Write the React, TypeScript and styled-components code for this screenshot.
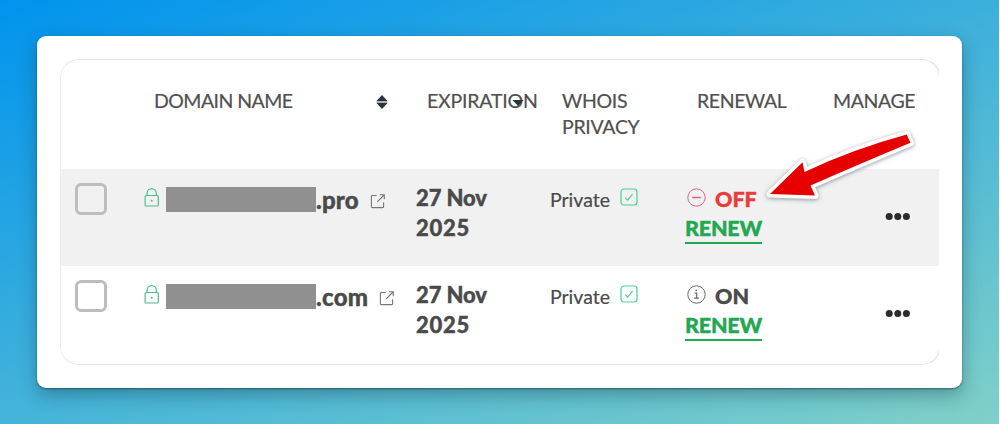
import React from 'react'
import styled, { createGlobalStyle } from 'styled-components'

const GlobalStyle = createGlobalStyle`
	body {
		margin: 0;
	}

	#root {
		font-family: Lato, 'Liberation Sans', sans-serif;
		color: #4a4a4a;
	}
`

const Backdrop = styled.div`
	box-sizing: border-box;
	width: 999px;
	height: 424px;
	padding: 36px 37px 36px;
	background: linear-gradient(160deg, #0093ee 0%, #80d0c7 100%);
	overflow: hidden;
`

const Card = styled.main`
	box-sizing: border-box;
	position: relative;
	height: 352px;
	padding: 23px 23px 0;
	background: #fff;
	border-radius: 9px;
	box-shadow: 0 1px 2px rgba(20, 50, 60, 0.55), 0 7px 18px rgba(20, 50, 60, 0.36);
`

const TableClip = styled.div`
	height: 306px;
	border-radius: 17px 0 0 17px;
	overflow: hidden;
`

const Table = styled.div`
	box-sizing: border-box;
	width: 881px;
	height: 306px;
	border: solid #e6e6e6;
	border-width: 1px 2px;
	border-left: 1px solid #ececec;
	border-radius: 19px;
	overflow: hidden;
`

const columns = '82px 273px 135px 135px 136px 118px'

const HeaderRow = styled.div`
	display: grid;
	grid-template-columns: ${columns};
	height: 109px;
`

const HeaderCell = styled.div<{ $spacing?: number }>`
	display: flex;
	align-items: flex-start;
	padding: 28px 0 0 11px;
	font-size: 19.5px;
	line-height: 26px;
	letter-spacing: ${(p) => p.$spacing || 0}px;
	color: #505050;
	-webkit-text-stroke: 0.2px;
`

const SortIcon = styled.svg<{ $offset: number }>`
	flex: none;
	width: 12px;
	height: 14px;
	margin: 7px 0 0 ${(p) => p.$offset}px;
`

const Row = styled.div<{ $shaded?: boolean }>`
	display: grid;
	grid-template-columns: ${columns};
	height: 97px;
	background: ${(p) => (p.$shaded ? '#f1f1f1' : '#fff')};
`

const Checkbox = styled.span`
	box-sizing: border-box;
	width: 32px;
	height: 32px;
	margin: 14px 0 0 14px;
	border: 3px solid #bdbdbd;
	border-radius: 6px;
`

const DomainCell = styled.div`
	display: flex;
	align-items: flex-start;
`

const LockIcon = styled.svg`
	width: 16px;
	height: 20px;
	margin: 19px 7px 0 0;
`

const Redacted = styled.span`
	width: 150px;
	height: 25px;
	margin-top: 17.5px;
	background: #909090;
`

const Tld = styled.span<{ $spacing: number }>`
	margin-top: 16px;
	font-size: 24px;
	font-weight: 900;
	line-height: 30px;
	letter-spacing: ${(p) => p.$spacing}px;
	-webkit-text-stroke: 0.4px;
`

const ExternalIcon = styled.svg`
	width: 16px;
	height: 16px;
	margin: 24px 0 0 11px;
`

const DateCell = styled.div`
	padding-top: 14px;
	font-size: 22px;
	font-weight: 900;
	line-height: 29.5px;
	letter-spacing: -0.1px;
	-webkit-text-stroke: 0.4px;
`

const DateYear = styled.div`
	letter-spacing: 0.7px;
`

const PrivacyCell = styled.div`
	display: flex;
	align-items: flex-start;
	margin-left: -1px;
	padding-top: 16px;
	font-size: 19.5px;
	line-height: 30px;
	-webkit-text-stroke: 0.2px;
`

const CheckIcon = styled.svg`
	width: 18px;
	height: 18px;
	margin: 3px 0 0 10px;
`

const RenewalCell = styled.div`
	display: flex;
	flex-direction: column;
	align-items: flex-start;
	margin-left: -1px;
	padding-top: 15px;
	-webkit-text-stroke: 0.4px;
`

const Status = styled.div<{ $off?: boolean }>`
	display: flex;
	align-items: flex-start;
	gap: 9px;
	padding-left: 2px;
	font-size: 21.5px;
	font-weight: 900;
	line-height: 30px;
	color: ${(p) => (p.$off ? '#e93b3b' : '#4a4a4a')};
`

const StatusIcon = styled.svg`
	width: 19px;
	height: 19px;
	margin-top: 4px;
`

const RenewLink = styled.a`
	height: 28px;
	font-size: 21.5px;
	font-weight: 900;
	line-height: 29px;
	letter-spacing: -0.2px;
	color: #22a850;
	border-bottom: 2px solid #22a850;
`

const MenuDots = styled.svg`
	width: 26px;
	height: 8px;
	margin: 44px 0 0 63px;
`

const Arrow = styled.svg`
	position: absolute;
	left: 723px;
	top: 83px;
	width: 170px;
	height: 90px;
	filter: drop-shadow(0 1px 2px rgba(40, 60, 80, 0.5));
`

interface Domain {
	tld: string
	tldSpacing: number
	autoRenew: boolean
}

const domains: Domain[] = [
	{ tld: '.pro', tldSpacing: 0.2, autoRenew: false },
	{ tld: '.com', tldSpacing: 0.3, autoRenew: true },
]

const DomainRow: React.FunctionComponent<Domain> = ({ tld, tldSpacing, autoRenew }: Domain) => {
	return (
		<Row $shaded={!autoRenew}>
			<Checkbox />
			<DomainCell>
				<LockIcon viewBox="0 0 16 20" fill="none" stroke="#4fbd8b" strokeWidth="1.2">
					<rect x="2.1" y="7.5" width="13.2" height="10.5" rx="1" />
					<path d="M4.1 7.5V5.2a4.6 4.6 0 0 1 9.2 0v2.3" />
					<circle cx="8.7" cy="12.7" r="1" fill="#4fbd8b" stroke="none" />
				</LockIcon>
				<Redacted />
				<Tld $spacing={tldSpacing}>{tld}</Tld>
				<ExternalIcon viewBox="0 0 16 16" fill="none" stroke="#777" strokeWidth="1.1">
					<path d="M6.7 2.5H2.2a.8.8 0 0 0-.8.8v10.5c0 .4.4.8.8.8h10.6c.4 0 .8-.4.8-.8V9.3M7.3 8.8 14 2M9.8 1.7h4.5v4.5" />
				</ExternalIcon>
			</DomainCell>
			<DateCell>
				27 Nov
				<DateYear>2025</DateYear>
			</DateCell>
			<PrivacyCell>
				Private
				<CheckIcon viewBox="0 0 18 18" fill="none" stroke="#4ccf94" strokeWidth="1.2">
					<rect x="1" y="1" width="16" height="16" rx="3" />
					<path d="m5.3 9.8 2.4 2.3 4.8-6" />
				</CheckIcon>
			</PrivacyCell>
			<RenewalCell>
				<Status $off={!autoRenew}>
					{autoRenew ? (
						<StatusIcon viewBox="0 0 19 19" fill="none" stroke="#666" strokeWidth="1">
							<circle cx="9.5" cy="9.5" r="8.7" />
							<path d="M7.5 8h2.2v5M7.2 13.2h4.6" strokeWidth="1.2" />
							<circle cx="9.3" cy="5.3" r="0.9" fill="#666" stroke="none" />
						</StatusIcon>
					) : (
						<StatusIcon viewBox="0 0 19 19" fill="none" stroke="#e3608a" strokeWidth="1">
							<circle cx="9.5" cy="9.5" r="8.7" />
							<path d="M5.2 9.5h8.6" strokeWidth="1.3" />
						</StatusIcon>
					)}
					{autoRenew ? 'ON' : 'OFF'}
				</Status>
				<RenewLink>RENEW</RenewLink>
			</RenewalCell>
			<MenuDots viewBox="0 0 26 8" fill="#2b2b2b">
				<circle cx="4.2" cy="3.6" r="3.5" />
				<circle cx="12.8" cy="3.6" r="3.5" />
				<circle cx="21.4" cy="3.6" r="3.5" />
			</MenuDots>
		</Row>
	)
}

const App: React.FunctionComponent = () => {
	return (
		<Backdrop>
			<GlobalStyle />
			<Card>
				<TableClip>
					<Table>
						<HeaderRow>
							<span />
							<HeaderCell $spacing={-0.55}>
								DOMAIN NAME
								<SortIcon $offset={83} viewBox="0 0 12 14" fill="#28343a">
									<path d="M6 0l5.5 6H.5zM.5 8h11L6 14z" />
									<path d="M.5 6h11v2H.5z" fill="#aab3b6" />
								</SortIcon>
							</HeaderCell>
							<HeaderCell $spacing={-0.2}>
								EXPIRATION
								<SortIcon $offset={-26} viewBox="0 0 12 14" fill="#28343a">
									<path d="M.5 5h11L6 11z" />
								</SortIcon>
							</HeaderCell>
							<HeaderCell $spacing={-0.3}>
								WHOIS
								<br />
								PRIVACY
							</HeaderCell>
							<HeaderCell $spacing={-0.4}>RENEWAL</HeaderCell>
							<HeaderCell $spacing={-0.4}>MANAGE</HeaderCell>
						</HeaderRow>
						{domains.map((domain) => (
							<DomainRow key={domain.tld} {...domain} />
						))}
					</Table>
				</TableClip>
				<Arrow viewBox="760 119 170 90">
					<path
						d="M770 194 802.5 162.3 804.5 172Q853 149 906.7 134.5L910.5 142.8Q862 163 810.5 185.5L815 195.5Z"
						fill="#e60000"
						stroke="#fff"
						strokeWidth="7"
						strokeLinejoin="round"
						paintOrder="stroke"
					/>
				</Arrow>
			</Card>
		</Backdrop>
	)
}

export default App
